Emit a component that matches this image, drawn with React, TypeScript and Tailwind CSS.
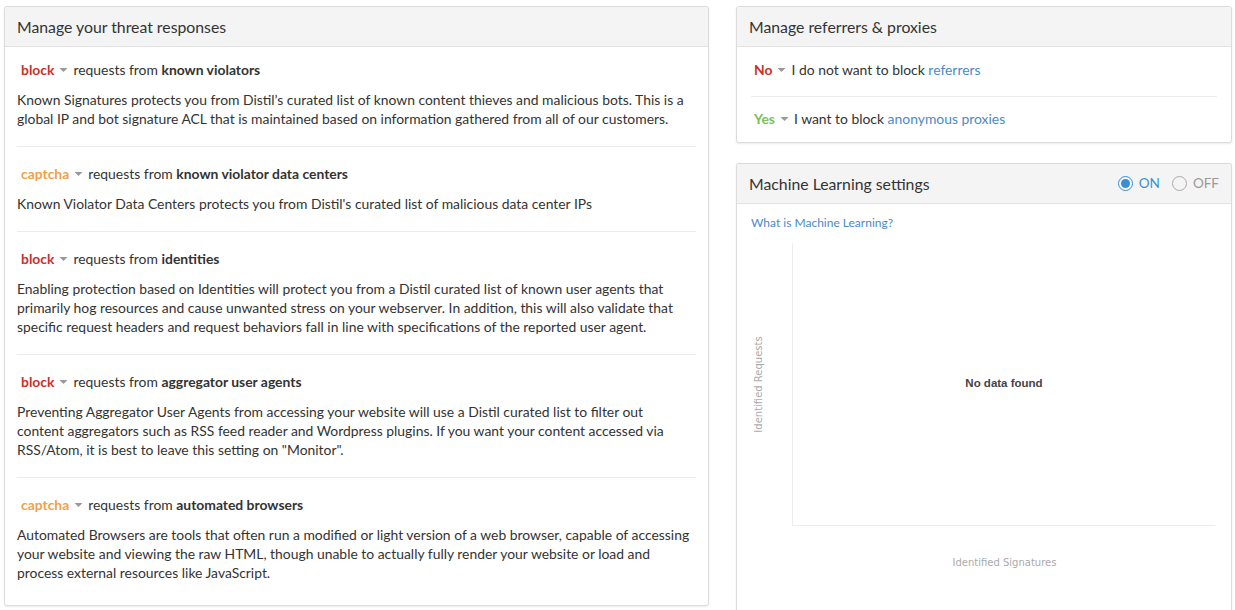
import React from 'react';

type Threat = {
  action: 'block' | 'captcha';
  target: string;
  lines: string[];
};

const threats: Threat[] = [
  {
    action: 'block',
    target: 'known violators',
    lines: [
      "Known Signatures protects you from Distil\u2019s curated list of known content thieves and malicious bots. This is a",
      'global IP and bot signature ACL that is maintained based on information gathered from all of our customers.',
    ],
  },
  {
    action: 'captcha',
    target: 'known violator data centers',
    lines: ["Known Violator Data Centers protects you from Distil's curated list of malicious data center IPs"],
  },
  {
    action: 'block',
    target: 'identities',
    lines: [
      'Enabling protection based on Identities will protect you from a Distil curated list of known user agents that',
      'primarily hog resources and cause unwanted stress on your webserver. In addition, this will also validate that',
      'specific request headers and request behaviors fall in line with specifications of the reported user agent.',
    ],
  },
  {
    action: 'block',
    target: 'aggregator user agents',
    lines: [
      'Preventing Aggregator User Agents from accessing your website will use a Distil curated list to filter out',
      'content aggregators such as RSS feed reader and Wordpress plugins. If you want your content accessed via',
      'RSS/Atom, it is best to leave this setting on "Monitor".',
    ],
  },
  {
    action: 'captcha',
    target: 'automated browsers',
    lines: [
      'Automated Browsers are tools that often run a modified or light version of a web browser, capable of accessing',
      'your website and viewing the raw HTML, though unable to actually fully render your website or load and',
      'process external resources like JavaScript.',
    ],
  },
];

const Caret = () => (
  <svg width="9" height="6" viewBox="0 0 9 6" className="mx-[5px] inline-block">
    <path d="M0.5 1 L8.5 1 L4.5 5 Z" fill="#999" />
  </svg>
);

const Panel = ({ title, right, children, className = '' }: { title: string; right?: React.ReactNode; children: React.ReactNode; className?: string }) => (
  <div className={`bg-white border border-[#dcdcdc] rounded-[3px] shadow-[0_1px_2px_rgba(0,0,0,0.08)] ${className}`}>
    <div className="h-[40px] bg-[#f4f4f4] border-b border-[#e2e2e2] flex items-center justify-between px-[12px] rounded-t-[3px]">
      <h2 className="text-[15.8px] text-[#333]">{title}</h2>
      {right}
    </div>
    {children}
  </div>
);

const Radio = ({ checked, label }: { checked: boolean; label: string }) => (
  <label className="flex items-center gap-[6px]">
    <span className={`w-[15px] h-[15px] rounded-full border flex items-center justify-center ${checked ? 'border-[#3b8fd0]' : 'border-[#aaa]'}`}>
      {checked && <span className="w-[9px] h-[9px] rounded-full bg-[#3b8fd0]" />}
    </span>
    <span className={`text-[13.5px] ${checked ? 'text-[#3b8fd0]' : 'text-[#999]'}`}>{label}</span>
  </label>
);

export default function App() {
  return (
    <div className="min-h-screen bg-white text-[#333] font-['Lato','Open_Sans',sans-serif] text-[13.9px] flex gap-[27px] pl-[4px] pr-[3px] pt-[6px]">
      <Panel title="Manage your threat responses" className="w-[705px] self-start">
        <div className="px-[12px]">
          {threats.map((t, i) => (
            <div
              key={t.target}
              className={`${i === 0 ? 'pt-[12px]' : 'pt-[16px]'} ${i < threats.length - 1 ? 'pb-[18px] border-b border-[#ececec]' : 'pb-[23px]'}`}
            >
              <div className="flex items-center h-[22px] pl-[4px]">
                <span className={`font-bold ${t.action === 'block' ? 'text-[#c9302c]' : 'text-[#f0a04b]'}`}>{t.action}</span>
                <Caret />
                <span>requests from&nbsp;</span>
                <span className="font-bold">{t.target}</span>
              </div>
              <div className="mt-[9px] leading-[19px]">
                {t.lines.map((l) => (
                  <p key={l} className="whitespace-nowrap">{l}</p>
                ))}
              </div>
            </div>
          ))}
        </div>
      </Panel>

      <div className="flex-1 flex flex-col gap-[20px]">
        <Panel title="Manage referrers & proxies">
          <div className="px-[14px] leading-[20px]">
            <div className="flex items-center pt-[13px] pb-[16px] border-b border-[#ececec] pl-[3px]">
              <span className="font-bold text-[#c9302c]">No</span>
              <Caret />
              <span>I do not want to block&nbsp;</span>
              <span className="text-[#4a8ac9]">referrers</span>
            </div>
            <div className="flex items-center pt-[12px] pb-[13px] pl-[3px]">
              <span className="font-bold text-[#7bbf5f]">Yes</span>
              <Caret />
              <span>I want to block&nbsp;</span>
              <span className="text-[#4a8ac9]">anonymous proxies</span>
            </div>
          </div>
        </Panel>

        <Panel
          title="Machine Learning settings"
          className="flex-1 rounded-b-none border-b-0"
          right={
            <div className="flex items-center gap-[12px]">
              <Radio checked label="ON" />
              <Radio checked={false} label="OFF" />
            </div>
          }
        >
          <div className="px-[14px] pt-[11px]">
            <a className="text-[12px] text-[#4a8ac9] block leading-[16px]">What is Machine Learning?</a>
            <div className="flex mt-[12px]">
              <div className="w-[41px] h-[283px] flex items-center">
                <div className="w-[14px] flex justify-center">
                  <span className="-rotate-90 whitespace-nowrap text-[10px] text-[#aaa] font-['DejaVu_Sans',sans-serif]">Identified Requests</span>
                </div>
              </div>
              <div className="flex-1 mr-[2px] h-[283px] border-l border-b border-[#ececec] flex items-center justify-center">
                <span className="text-[11.5px] font-bold text-[#444] font-['Liberation_Sans',sans-serif]">No data found</span>
              </div>
            </div>
            <div className="pl-[41px] mt-[29px] text-center text-[10px] text-[#aaa] font-['DejaVu_Sans',sans-serif]">Identified Signatures</div>
          </div>
        </Panel>
      </div>
    </div>
  );
}
